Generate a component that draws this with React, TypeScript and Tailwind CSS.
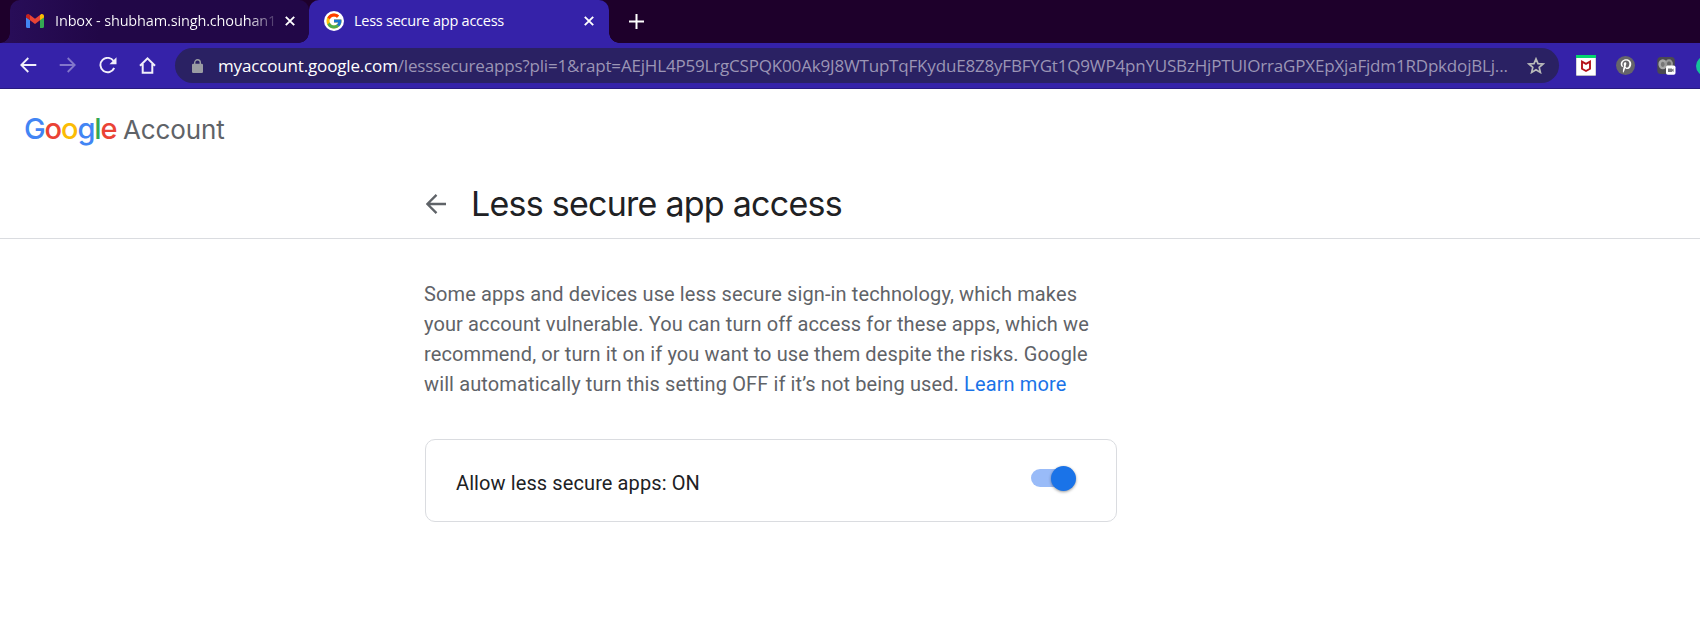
import type { ReactNode } from "react";
import { FcGoogle } from "react-icons/fc";
import { FaPinterestP } from "react-icons/fa";

function GmailIcon() {
  return (
    <svg width="18" height="14" viewBox="0 0 18 14" className="shrink-0">
      <path fill="#4285f4" d="M0 3v9.8c0 .7.5 1.2 1.2 1.2H4V6L0 3z" />
      <path fill="#34a853" d="M18 3v9.8c0 .7-.5 1.2-1.2 1.2H14V6l4-3z" />
      <path fill="#ea4335" d="M4 6.2V1l5 3.7L14 1v5.2L9 9.9z" />
      <path fill="#c5221f" d="M0 2v1.4l4 2.9V1L3.3.5C2-.5 0 .4 0 2z" />
      <path fill="#fbbc04" d="M18 2v1.4l-4 2.9V1l.7-.5C16-.5 18 .4 18 2z" />
    </svg>
  );
}

function CloseIcon() {
  return (
    <svg width="10" height="10" viewBox="0 0 10 10" className="shrink-0">
      <path d="M.8.8l8.4 8.4M9.200.8L.8 9.200" stroke="#fff" strokeWidth="1.9" fill="none" />
    </svg>
  );
}

function ArrowIcon({ className }: { className: string }) {
  return (
    <svg width="17" height="16" viewBox="0 0 17 16" className={className}>
      <path d="M16.300 8H1.500M8.300 1L1.300 8l7 7" fill="none" stroke="currentColor" strokeWidth="1.8" />
    </svg>
  );
}

function ReloadIcon() {
  return (
    <svg width="18" height="17" viewBox="0 0 18 17" className="shrink-0">
      <path d="M14.600 4A7.200 7.200 0 1 0 15.200 11" fill="none" stroke="#f1effa" strokeWidth="1.9" />
      <path d="M17.500.3v7h-7z" fill="#f1effa" />
    </svg>
  );
}

function HomeIcon() {
  return (
    <svg width="17" height="17" viewBox="0 0 17 17" className="shrink-0">
      <path d="M1 8.700L8.500 1.400 16 8.700M3.700 7v8.700h9.600V7" fill="none" stroke="#f1effa" strokeWidth="2" />
    </svg>
  );
}

function LockIcon() {
  return (
    <svg width="11" height="14" viewBox="0 0 11 14" className="shrink-0">
      <rect y="4.800" width="11" height="9.200" rx="1.200" fill="#9a9ca3" />
      <path d="M2.700 5.500V3.600a2.800 2.800 0 0 1 5.600 0v1.900" fill="none" stroke="#9a9ca3" strokeWidth="1.400" />
    </svg>
  );
}

function StarIcon() {
  return (
    <svg width="18" height="17" viewBox="0 0 18 17" className="shrink-0">
      <path
        d="M9 1.900l2 4.700 5.100.4-3.900 3.400 1.200 5L9 12.700l-4.400 2.700 1.200-5L1.900 7l5.100-.4z"
        fill="none"
        stroke="#b9bab9"
        strokeWidth="1.700"
      />
    </svg>
  );
}

function McAfeeIcon() {
  return (
    <svg width="20" height="21" viewBox="0 0 20 21" className="shrink-0">
      <rect width="20" height="21" rx="1" fill="#b9b9c4" />
      <rect x=".6" width="18.800" height="20" fill="#fff" />
      <rect width="20" height="3" fill="#05d56f" />
      <path d="M6 6.700l4 2.200 4-2.200v7L10 16l-4-2.300z" fill="none" stroke="#b5121b" strokeWidth="1.900" />
    </svg>
  );
}

function CameraIcon() {
  return (
    <svg width="19" height="18" viewBox="0 0 19 18" className="shrink-0">
      <rect x=".3" width="17.500" height="17" rx="3.500" fill="#4b4a50" />
      <ellipse cx="5.800" cy="7.300" rx="3.200" ry="3.800" fill="#777" stroke="#a8a8a8" strokeWidth="2.400" />
      <ellipse cx="12" cy="6.800" rx="3" ry="3.500" fill="#666" stroke="#989898" strokeWidth="2" />
      <rect x="9" y="8.500" width="9.500" height="9.200" rx="1.800" fill="#fff" />
      <path d="M11 11.500h4v1l1.600-1v3.600l-1.600-1v1h-4z" fill="#77777d" />
    </svg>
  );
}

function TabLabel({ children }: { children: ReactNode }) {
  return <div className="flex items-center whitespace-nowrap font-['Open_Sans',sans-serif] text-[14.5px] leading-5 text-white">{children}</div>;
}

function TabStrip() {
  return (
    <div className="flex h-[43px] bg-[#1e002b] pl-[10px]">
      <div className="relative flex w-[299px] items-center rounded-t-[10px] bg-linear-to-r from-[#280d58] via-[#210747] via-30% to-[#210747] pb-[2px] pl-4">
        <span className="absolute bottom-0 -left-[10px] size-[10px] bg-[radial-gradient(circle_at_0_0,transparent_9.5px,#280d58_10px)]" />
        <TabLabel>
          <GmailIcon />
          <span className="ml-[11px] w-[219px] overflow-hidden bg-linear-to-r from-white from-88% to-white/20 bg-clip-text tracking-[-0.15px] text-transparent">
            Inbox - shubham.singh.chouhan1
          </span>
        </TabLabel>
        <span className="ml-[11px]">
          <CloseIcon />
        </span>
      </div>
      <div className="relative flex w-[300px] items-center rounded-t-[10px] bg-[#3522a9] pb-[2px] pl-[15px]">
        <span className="absolute bottom-0 -left-[10px] size-[10px] bg-[radial-gradient(circle_at_0_0,transparent_9.5px,#3522a9_10px)]" />
        <span className="absolute -right-[10px] bottom-0 size-[10px] bg-[radial-gradient(circle_at_100%_0,transparent_9.5px,#3522a9_10px)]" />
        <TabLabel>
          <span className="flex size-5 items-center justify-center rounded-full bg-white">
            <FcGoogle size={18} />
          </span>
          <span className="ml-[10px] w-[230px] tracking-[-0.25px]">Less secure app access</span>
        </TabLabel>
        <CloseIcon />
      </div>
      <svg width="15" height="15" viewBox="0 0 15 15" className="mt-[14px] ml-5">
        <path d="M7.500 0v15M0 7.500h15" stroke="#fff" strokeWidth="2" />
      </svg>
    </div>
  );
}

function Toolbar() {
  return (
    <div className="flex h-[46px] items-start overflow-hidden border-b border-[#281a80] bg-[#3522a9] pt-[5px]">
      <div className="flex h-[35px] w-[175px] shrink-0 items-center pb-px pl-[20px]">
        <ArrowIcon className="text-[#f1effa]" />
        <ArrowIcon className="ml-[22px] rotate-180 text-[#8377cb]" />
        <span className="ml-[23px]">
          <ReloadIcon />
        </span>
        <span className="ml-[22px]">
          <HomeIcon />
        </span>
      </div>
      <div className="flex h-[35px] w-[1384px] shrink-0 items-center rounded-full bg-[#2a2163] pl-[17px]">
        <LockIcon />
        <div className="ml-[15px] w-[1309px] whitespace-nowrap font-['Open_Sans',sans-serif] text-[17px] leading-6">
          <span className="tracking-[-0.16px] text-white">myaccount.google.com</span>
          <span className="tracking-[-0.18px] text-[#9b95b5]">
            /lesssecureapps?pli=1&amp;rapt=AEjHL4P59LrgCSPQK00Ak9J8WTupTqFKyduE8Z8yFBFYGt1Q9WP4pnYUSBzHjPTUIOrraGPXEpXjaFjdm1RDpkdojBLj...
          </span>
        </div>
        <StarIcon />
      </div>
      <div className="flex h-[35px] shrink-0 items-center pl-[17px]">
        <McAfeeIcon />
        <span className="ml-5 flex size-[19px] items-center justify-center rounded-full bg-[#666569] text-white">
          <FaPinterestP size={14} />
        </span>
        <span className="ml-[22px]">
          <CameraIcon />
        </span>
        <span className="ml-[20px] size-5 rounded-full bg-[#15c39a]" />
      </div>
    </div>
  );
}

export default function App() {
  return (
    <div className="h-[634px] overflow-hidden bg-white">
      <TabStrip />
      <Toolbar />
      <header className="h-[150px] border-b border-[#dadce0] font-['Inter',sans-serif]">
        <div className="flex h-[82px] items-baseline pt-[22px] pl-[24px] leading-9">
          <span className="w-[99px] text-[29px] font-medium tracking-[-1.1px]">
            <span className="text-[#4285f4]">G</span>
            <span className="text-[#ea4335]">o</span>
            <span className="text-[#fbbc05]">o</span>
            <span className="text-[#4285f4]">g</span>
            <span className="text-[#34a853]">l</span>
            <span className="text-[#ea4335]">e</span>
          </span>
          <span className="text-[26px] tracking-[-0.1px] text-[#5f6368]">Account</span>
        </div>
        <div className="flex items-center pl-[426px]">
          <svg width="20" height="20" viewBox="0 0 20 20" className="mr-[25px]">
            <path d="M20 10H1.800M10.500 .900L1.400 10l9.100 9.100" fill="none" stroke="#5f6368" strokeWidth="2.300" />
          </svg>
          <h1 className="text-[34px] leading-[66px] tracking-[-0.75px] text-[#202124]">Less secure app access</h1>
        </div>
      </header>
      <main className="ml-[425px] w-[692px] pt-10 font-['Roboto',sans-serif] text-[20px] tracking-[0.12px]">
        <p className="-ml-px leading-[30px] text-[#5f6368]">
          Some apps and devices use less secure sign-in technology, which makes
          <br />
          your account vulnerable. You can turn off access for these apps, which we
          <br />
          recommend, or turn it on if you want to use them despite the risks. Google
          <br />
          will automatically turn this setting OFF if it’s not being used. <a className="text-[#1a73e8]">Learn more</a>
        </p>
        <section className="mt-10 flex h-[83px] items-center justify-between rounded-[10px] border border-[#dadce0] pr-[40px] pl-[30px]">
          <span className="pt-[4px] tracking-[0.1px] text-[#202124]">Allow less secure apps: ON</span>
          <div className="mb-[5px] flex h-[18px] w-[45px] items-center justify-end rounded-full bg-linear-to-r from-[#99bbf8] from-80% to-transparent to-80%">
            <span className="size-[25px] shrink-0 rounded-full bg-[#1a73e8] shadow-[0_1px_3px_rgba(0,0,0,0.4)]" />
          </div>
        </section>
      </main>
    </div>
  );
}
